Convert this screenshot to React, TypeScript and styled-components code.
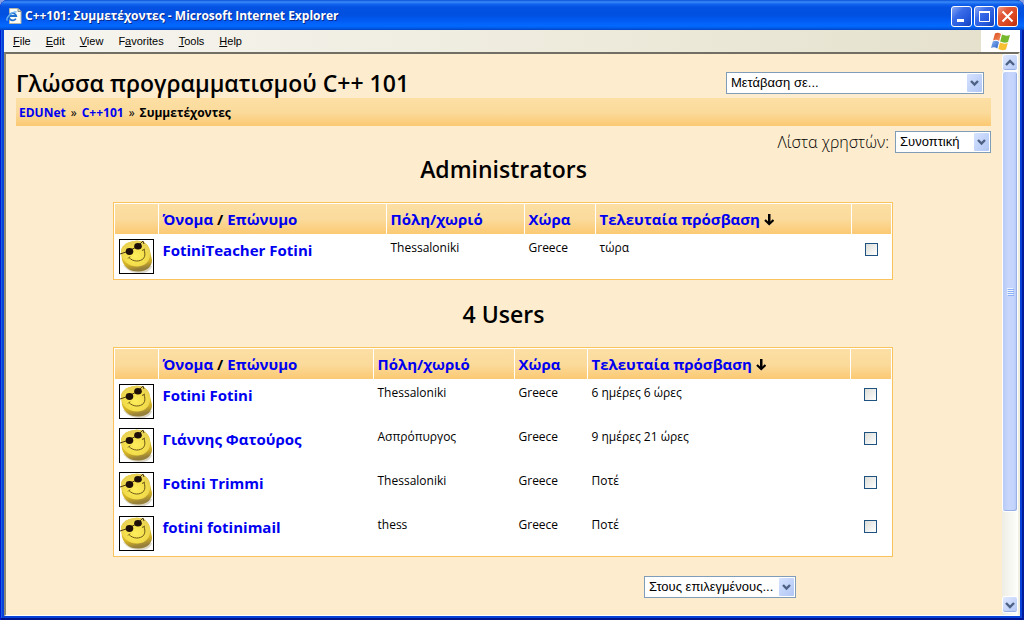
import React from "react";
import styled, { createGlobalStyle } from "styled-components";

const GlobalStyle = createGlobalStyle`
  *, *::before, *::after { box-sizing: border-box; }
  html, body { margin: 0; padding: 0; background: #8ba0e0; }
`;

const heading = `"Open Sans", "Noto Sans", sans-serif`;
const system = `"Liberation Sans", Arial, sans-serif`;

const Window = styled.div`
  display: flex;
  flex-direction: column;
  height: 100vh;
  padding: 0 4px 4px;
  overflow: hidden;
  border-radius: 8px 8px 0 0;
  background: #0842d8;
  box-shadow: inset 1px 0 #0019cf, inset -2px 0 #001b9c, inset 0 -2px #00138c, inset 2px 0 #1660e8;
`;

const TitleBar = styled.header`
  display: flex;
  align-items: center;
  flex: none;
  height: 30px;
  margin: 0 -4px;
  padding: 2px 6px 0;
  gap: 3px;
  background: linear-gradient(
    #0a50d8 0, #3a8cf8 2px, #1364ee 4px, #0452e2 7px, #0150e0 15px,
    #025cf4 21px, #0369ff 26px, #025ce8 28px, #0144c4 30px
  );
`;

const WindowTitle = styled.h1`
  flex: 1;
  margin: 0;
  font: 700 12px/18px ${heading};
  color: #fff;
  text-shadow: 1px 1px #0a2a8a;
  white-space: nowrap;
`;

const WindowButtons = styled.div`
  display: flex;
  gap: 2px;
`;

const WindowButton = styled.button<{ $close?: boolean }>`
  display: grid;
  place-items: center;
  width: 21px;
  height: 21px;
  padding: 0;
  border: 1px solid #fff;
  border-radius: 3px;
  background: ${(p) =>
    p.$close
      ? "linear-gradient(135deg, #f0a28c 0, #e2593a 30%, #d8431c 70%, #b8300c)"
      : "linear-gradient(135deg, #8aa8f4 0, #3a6ce8 35%, #2458dc 70%, #1440b8)"};
`;

const MenuBar = styled.nav`
  display: flex;
  flex: none;
  height: 22px;
  background: linear-gradient(90deg, #f6f5f0, #edeadb 60%, #e4e0cc);
`;

const MenuList = styled.ul`
  display: flex;
  flex: 1;
  gap: 15px;
  margin: 0;
  padding: 0 9px;
  list-style: none;
`;

const MenuButton = styled.button`
  padding: 0;
  border: 0;
  background: none;
  font: 11px/22px ${system};
  color: #000;
`;

const Throbber = styled.div`
  display: grid;
  place-items: center;
  width: 39px;
  background: #fff;
`;

const Viewport = styled.div`
  display: flex;
  flex: 1;
  min-height: 0;
  border: solid;
  border-width: 2px 2px 1px;
  border-color: #716f64 #f1efe2 #fff #8a8776;
  background: #feecce;
`;

const Page = styled.main`
  flex: 1;
  min-width: 0;
  overflow: hidden;
  padding: 0 11px 0 10px;
`;

const PageHeader = styled.header`
  display: flex;
  align-items: center;
  justify-content: space-between;
  height: 44px;
  padding: 14px 7px 0 0;
`;

const CourseTitle = styled.h2`
  margin: 0;
  font: 600 23px/30px ${heading};
  color: #000;
`;

const Breadcrumbs = styled.nav`
  display: flex;
  gap: 5px;
  height: 28px;
  padding: 0 3px;
  background: linear-gradient(#fddfa4 0, #fbdb9c 50%, #fbc972);
  font: 700 12px/30px ${heading};
  color: #000;
`;

const Separator = styled.span`
  font-weight: 400;
`;

const Link = styled.a`
  color: #0000f0;
  text-decoration: none;
`;

const ListControls = styled.div`
  display: flex;
  align-items: center;
  justify-content: flex-end;
  gap: 6px;
  padding: 5px 0 1px;
  font: 300 16px/22px ${heading};
  color: #000;
`;

const SelectBox = styled.span<{ $width: number }>`
  display: block;
  position: relative;
  width: ${(p) => p.$width}px;
  height: 22px;

  svg {
    position: absolute;
    top: 2px;
    right: 2px;
    pointer-events: none;
  }
`;

const SelectField = styled.select`
  appearance: none;
  display: block;
  width: 100%;
  height: 22px;
  margin: 0;
  padding: 0 20px 0 4px;
  border: 1px solid #7f9db9;
  border-radius: 0;
  background: #fff;
  font: 13px/20px ${system};
  color: #000;
`;

const GroupTitle = styled.h3`
  margin: 0 0 18px;
  font: 600 23px/30px ${heading};
  text-align: center;
  color: #000;
`;

const PeopleTable = styled.table`
  width: 80%;
  margin: 0 0 19px calc(10% - 1px);
  table-layout: fixed;
  border: 1px solid #fbc35e;
  border-spacing: 1px;
  background: #fff;
  color: #000;
`;

const HeadCell = styled.th`
  height: 30px;
  padding: 0 4px;
  background: linear-gradient(#fddfa4 0, #fbdb9c 50%, #fbc972);
  font: 700 15px/30px ${heading};
  text-align: left;
  white-space: nowrap;

  svg { vertical-align: -1px; }
`;

const Cell = styled.td<{ $center?: boolean }>`
  height: 43px;
  padding: 4px;
  vertical-align: top;
  font: 12px/18px ${heading};
  text-align: ${(p) => (p.$center ? "center" : "left")};
`;

const NameLink = styled(Link)`
  display: block;
  font: 700 15px/22px ${heading};
`;

const AvatarFrame = styled.span`
  display: block;
  width: 35px;
  height: 35px;
  border: 1px solid #000;

  svg { display: block; }
`;

const Tick = styled.input`
  appearance: none;
  display: inline-block;
  width: 13px;
  height: 13px;
  margin: 4px 0 0;
  border: 1px solid #1d5281;
  background: linear-gradient(135deg, #dcdcd7, #fff);
`;

const ActionRow = styled.div`
  display: flex;
  justify-content: flex-end;
  padding-right: 20%;
`;

const ScrollBar = styled.div`
  display: flex;
  flex-direction: column;
  flex: none;
  width: 16px;
  padding-bottom: 2px;
  background: linear-gradient(90deg, #eeede5, #fefefb);
`;

const ScrollButton = styled.button`
  display: grid;
  place-items: center;
  flex: none;
  height: 17px;
  padding: 0;
  border: 1px solid #fff;
  border-radius: 3px;
  background: linear-gradient(135deg, #dfe8ff, #b4c8f6);
  box-shadow: inset 0 -1px #98b0e4;
`;

const ScrollThumb = styled.div`
  display: grid;
  place-items: center;
  flex: 441;
  border: 1px solid #fff;
  border-radius: 3px;
  background: linear-gradient(90deg, #b8cbf6, #c8d6fb 40%, #c4d4fc 75%, #b4c8f4);
  box-shadow: inset -1px -1px #98b0e4;
`;

const ScrollTrack = styled.div`
  flex: 84;
`;

function SelectArrow() {
  return (
    <svg width="15" height="18" viewBox="0 0 15 18" aria-hidden="true">
      <defs>
        <linearGradient id="selectArrow" x1="0" y1="0" x2="1" y2="1">
          <stop offset="0" stopColor="#d6e2ff" />
          <stop offset="1" stopColor="#b0c6f4" />
        </linearGradient>
      </defs>
      <rect width="15" height="18" rx="1" fill="url(#selectArrow)" />
      <path d="M4 7l3.5 3.5L11 7" fill="none" stroke="#4d6185" strokeWidth="2.4" />
    </svg>
  );
}

function Select({ id, label, width, value }: { id: string; label?: string; width: number; value: string }) {
  return (
    <SelectBox $width={width}>
      <SelectField id={id} aria-label={label}>
        <option>{value}</option>
      </SelectField>
      <SelectArrow />
    </SelectBox>
  );
}

function Chevron({ up }: { up?: boolean }) {
  return (
    <svg width="10" height="8" viewBox="0 0 10 8" aria-hidden="true">
      <path d={up ? "M1 6l4-4 4 4" : "M1 2l4 4 4-4"} fill="none" stroke="#4d6185" strokeWidth="2.4" />
    </svg>
  );
}

function Avatar() {
  return (
    <AvatarFrame>
      <svg width="33" height="33" viewBox="0 0 33 33" role="img" aria-label="User picture">
        <defs>
          <radialGradient id="face" cx="0.5" cy="0.6" r="0.6">
            <stop offset="0" stopColor="#fdee5c" />
            <stop offset="0.6" stopColor="#f3dd4a" />
            <stop offset="1" stopColor="#e6cf58" />
          </radialGradient>
          <linearGradient id="rim" x1="0" y1="0" x2="0.2" y2="1">
            <stop offset="0.4" stopColor="#ecd23a" />
            <stop offset="0.8" stopColor="#cfae24" />
            <stop offset="1" stopColor="#96803c" />
          </linearGradient>
        </defs>
        <rect width="33" height="33" fill="#fff" />
        <path d="M3 25q6 8 15 8h6q7-2 8-7z" fill="#dcd8c8" />
        <path d="M1 12C1 6 6 2 15 1c9-1 14 4 15 10l2 9c0 7-5 11-13 11.500C10 32 4 27 2 20z" fill="url(#rim)" />
        <path d="M1 12C1 6 6 2 15 1c9-1 14 4 15 11 1 8-4 14-12 14.500C8 27 1 20 1 12z" fill="url(#face)" />
        <path d="M0 14l9-3 9-5 5-5 1 3" fill="none" stroke="#4a3a14" />
        <ellipse cx="9.500" cy="11.500" rx="3.800" ry="3.400" fill="#1e1008" />
        <ellipse cx="18" cy="6.200" rx="3.800" ry="3.300" fill="#1e1008" />
        <path d="M9 17.500c4 4.500 11 4.500 14.500 1 2-2.500 1.500-6 .5-9M22 10.500l3-1.500M8 18.500l2-2" fill="none" stroke="#6b5718" />
      </svg>
    </AvatarFrame>
  );
}

function SortArrow() {
  return (
    <svg width="10" height="13" viewBox="0 0 10 13" role="img" aria-label="Descending">
      <path d="M4 1h2.500v10H4z" fill="#000" />
      <path d="M1 7l4.200 4L9.500 7" fill="none" stroke="#000" strokeWidth="2.200" />
    </svg>
  );
}

function PageIcon() {
  return (
    <svg width="16" height="16" viewBox="0 0 16 16" aria-hidden="true">
      <path d="M3.500 .5h8.500l3 3v12H3.500z" fill="#fdfdf6" stroke="#b8b8a8" />
      <path d="M12 .5v3h3" fill="#d8d8cc" stroke="#8a8a7c" />
      <path d="M9.800 10.600A3.600 3.600 0 1 1 10.200 8H4" fill="none" stroke="#1f6fd0" strokeWidth="1.800" />
      <path d="M1.500 12.500C-1.500 11 6 3 10.500 4" fill="none" stroke="#6db0f2" strokeWidth="1.300" />
    </svg>
  );
}

function WindowsFlag() {
  return (
    <svg width="21" height="19" viewBox="0 0 21 19" aria-hidden="true">
      <defs>
        <linearGradient id="flagRed" x1="0" y1="0" x2="1" y2="1">
          <stop offset="0" stopColor="#d84a1c" />
          <stop offset="1" stopColor="#f49060" />
        </linearGradient>
        <linearGradient id="flagBlue" x1="0" y1="0" x2="1" y2="1">
          <stop offset="0" stopColor="#8ab4f0" />
          <stop offset="1" stopColor="#2c62c8" />
        </linearGradient>
      </defs>
      <path d="M5 1.500q3-1.500 6 .5l-1.800 7q-3-2-6.200-.500z" fill="url(#flagRed)" />
      <path d="M12 2.500q4 2 8 .5l-2 7q-4 1.500-7.800-.500z" fill="#76b82e" />
      <path d="M2.800 9.500q3-1.500 6.200.500l-1.700 6.500q-3-2-6.300-.500z" fill="url(#flagBlue)" />
      <path d="M10 10.500q4 2 7.800.500l-1.800 6.500q-4 1.500-7.700-.500z" fill="#f6c030" />
    </svg>
  );
}

const menus: [string, string, string][] = [
  ["", "F", "ile"],
  ["", "E", "dit"],
  ["", "V", "iew"],
  ["F", "a", "vorites"],
  ["", "T", "ools"],
  ["", "H", "elp"],
];

type Person = { name: string; city: string; country: string; access: string };

const admins: Person[] = [
  { name: "FotiniTeacher Fotini", city: "Thessaloniki", country: "Greece", access: "τώρα" },
];

const users: Person[] = [
  { name: "Fotini Fotini", city: "Thessaloniki", country: "Greece", access: "6 ημέρες 6 ώρες" },
  { name: "Γιάννης Φατούρος", city: "Ασπρόπυργος", country: "Greece", access: "9 ημέρες 21 ώρες" },
  { name: "Fotini Trimmi", city: "Thessaloniki", country: "Greece", access: "Ποτέ" },
  { name: "fotini fotinimail", city: "thess", country: "Greece", access: "Ποτέ" },
];

const Col = styled.col<{ $width?: number }>`
  width: ${(p) => (p.$width ? `${p.$width}px` : "auto")};
`;

function People({ rows, widths }: { rows: Person[]; widths: (number | undefined)[] }) {
  return (
    <PeopleTable>
      <colgroup>
        {widths.map((w, i) => (
          <Col key={i} $width={w} />
        ))}
      </colgroup>
      <thead>
        <tr>
          <HeadCell />
          <HeadCell>
            <Link href="#first">Όνομα</Link> / <Link href="#last">Επώνυμο</Link>
          </HeadCell>
          <HeadCell><Link href="#city">Πόλη/χωριό</Link></HeadCell>
          <HeadCell><Link href="#country">Χώρα</Link></HeadCell>
          <HeadCell>
            <Link href="#access">Τελευταία πρόσβαση</Link> <SortArrow />
          </HeadCell>
          <HeadCell />
        </tr>
      </thead>
      <tbody>
        {rows.map((p) => (
          <tr key={p.name}>
            <Cell><Avatar /></Cell>
            <Cell><NameLink href="#user">{p.name}</NameLink></Cell>
            <Cell>{p.city}</Cell>
            <Cell>{p.country}</Cell>
            <Cell>{p.access}</Cell>
            <Cell $center><Tick type="checkbox" aria-label={p.name} /></Cell>
          </tr>
        ))}
      </tbody>
    </PeopleTable>
  );
}

export default function App() {
  return (
    <>
      <GlobalStyle />
      <Window>
        <TitleBar>
          <PageIcon />
          <WindowTitle>C++101: Συμμετέχοντες - Microsoft Internet Explorer</WindowTitle>
          <WindowButtons>
            <WindowButton aria-label="Minimize">
              <svg width="13" height="13"><path d="M2 9h7v3H2z" fill="#fff" /></svg>
            </WindowButton>
            <WindowButton aria-label="Maximize">
              <svg width="13" height="13">
                <path d="M1.500 2.500h10v9h-10z" fill="none" stroke="#fff" />
                <path d="M1 1h11v2H1z" fill="#fff" />
              </svg>
            </WindowButton>
            <WindowButton $close aria-label="Close">
              <svg width="13" height="13">
                <path d="M1.500 1.500l10 10M11.500 1.500l-10 10" stroke="#fff" strokeWidth="2" />
              </svg>
            </WindowButton>
          </WindowButtons>
        </TitleBar>
        <MenuBar>
          <MenuList>
            {menus.map(([before, key, after]) => (
              <li key={before + key + after}>
                <MenuButton>{before}<u>{key}</u>{after}</MenuButton>
              </li>
            ))}
          </MenuList>
          <Throbber><WindowsFlag /></Throbber>
        </MenuBar>
        <Viewport>
          <Page>
            <PageHeader>
              <CourseTitle>Γλώσσα προγραμματισμού C++ 101</CourseTitle>
              <Select id="jump" label="Μετάβαση" width={258} value="Μετάβαση σε..." />
            </PageHeader>
            <Breadcrumbs>
              <Link href="#home">EDUNet</Link>
              <Separator>»</Separator>
              <Link href="#course">C++101</Link>
              <Separator>»</Separator>
              <span>Συμμετέχοντες</span>
            </Breadcrumbs>
            <ListControls>
              <label htmlFor="mode">Λίστα χρηστών:</label>
              <Select id="mode" width={96} value="Συνοπτική" />
            </ListControls>
            <GroupTitle>Administrators</GroupTitle>
            <People rows={admins} widths={[43, 227, 137, 70, undefined, 39]} />
            <GroupTitle>4 Users</GroupTitle>
            <People rows={users} widths={[43, 214, 140, 72, undefined, 40]} />
            <ActionRow>
              <Select id="action" label="Ενέργεια" width={152} value="Στους επιλεγμένους..." />
            </ActionRow>
          </Page>
          <ScrollBar>
            <ScrollButton aria-label="Scroll up"><Chevron up /></ScrollButton>
            <ScrollThumb>
              <svg width="7" height="8" aria-hidden="true">
                <path d="M0 .5h6M0 2.500h6M0 4.500h6M0 6.500h6" stroke="#eef4fe" />
                <path d="M1 1.500h6M1 3.500h6M1 5.500h6M1 7.500h6" stroke="#8cb0f8" />
              </svg>
            </ScrollThumb>
            <ScrollTrack />
            <ScrollButton aria-label="Scroll down"><Chevron /></ScrollButton>
          </ScrollBar>
        </Viewport>
      </Window>
    </>
  );
}
